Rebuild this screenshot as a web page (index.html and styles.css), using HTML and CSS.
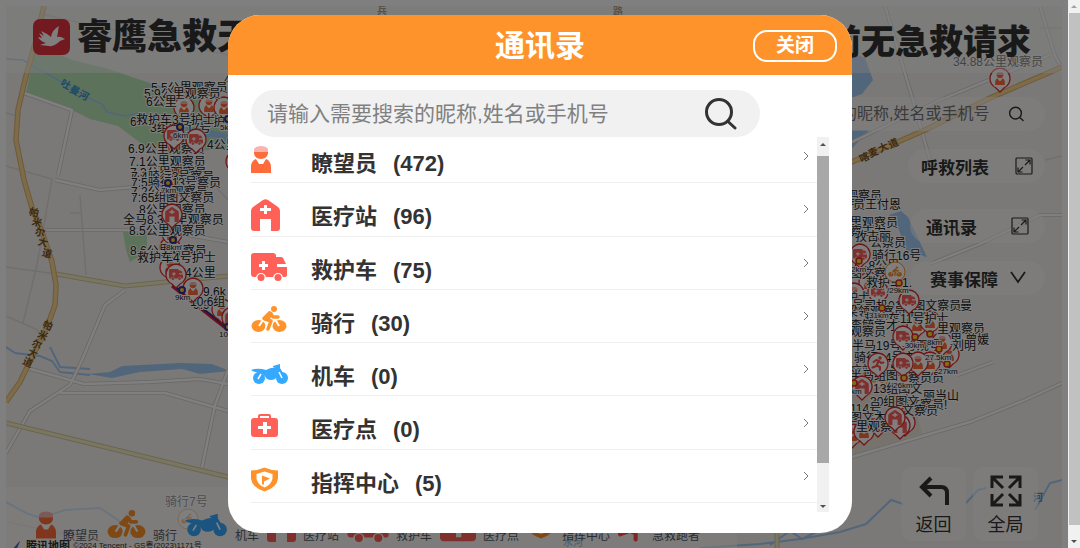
FILE: index.html
```html
<!DOCTYPE html>
<html lang="zh-CN">
<head>
<meta charset="utf-8">
<title>通讯录</title>
<link rel="stylesheet" href="styles.css">
</head>
<body>
<svg class="sprite" aria-hidden="true">
  <symbol id="i-watcher" viewBox="0 0 20 27">
    <path fill="#ff6c3b" d="M3 5h14v2c0 3-3 6-7 6S3 10 3 7zM0 27v-6c0-4 2-7 5-8l3 5h4l3-5c3 1 5 4 5 8v6z"/>
    <path fill="#fff" d="M6 13l4 5 4-5-4 1z"/>
    <path fill="#f9b4ae" d="M3 6V3c1-2 4-3 7-3s6 1 7 3v3z"/>
  </symbol>
  <symbol id="i-station" viewBox="0 0 29 32">
    <path fill="#ff6058" d="M12 1q2.500-1.500 5 0l10 7q2 1.500 2 4v17q0 3-3 3h-6V20H9v12H3q-3 0-3-3V12q0-2.500 2-4z"/>
    <path fill="#fff" d="M13 6h3v3h4v3h-4v3h-3v-3H9V9h4z"/>
  </symbol>
  <symbol id="i-ambulance" viewBox="0 0 36 28">
    <path fill="#ff6058" d="M3 0h19q3 0 3 3v1h5q1 0 2 1l3 6H26v3h10v8q0 2-2 2H3q-3 0-3-3V3q0-3 3-3z"/>
    <path fill="#fff" d="M11 8h3v3h3v3h-3v3h-3v-3H8v-3h3z"/>
    <circle cx="10" cy="25" r="5" fill="#fff"/><circle cx="27" cy="25" r="5" fill="#fff"/>
    <circle cx="10" cy="24.500" r="3.500" fill="#ff6058"/><circle cx="27" cy="24.500" r="3.500" fill="#ff6058"/>
  </symbol>
  <symbol id="i-bike" viewBox="0 0 36 26">
    <g fill="#ff932b"><ellipse cx="7.500" cy="20" rx="7" ry="6"/><ellipse cx="28.500" cy="20" rx="7" ry="6"/><circle cx="23" cy="3" r="3"/></g>
    <path d="M8 20l4-6M28 20l-4-7" stroke="#fff" stroke-width="2"/>
    <path fill="none" stroke="#fff" stroke-width="6" stroke-linejoin="round" d="M17 23l2-7-5-3"/>
    <path fill="none" stroke="#ff932b" stroke-width="3.500" stroke-linecap="round" stroke-linejoin="round" d="M17 23l3-8-6-2 5-6 3 4h5"/>
    <path fill="#ff932b" d="M11 12l7-7 4 2-4 8-6-1z"/>
  </symbol>
  <symbol id="i-moto" viewBox="0 0 38 20">
    <g fill="#35a8ff"><circle cx="8" cy="14" r="6"/><circle cx="31" cy="14" r="6"/>
    <path d="M0 6q5-2 11-1l4 1q6-3 9-2l-2-1V2l7-2v4l3 5-4 1-4 5q-4 2-8 0l-4-5-8-2q-3-1-4-2z"/></g>
    <path d="M7 15l3-5M31 14l-3-6" stroke="#fff" stroke-width="1.500"/>
  </symbol>
  <symbol id="i-kit" viewBox="0 0 27 23">
    <path fill="none" stroke="#ff6058" stroke-width="2" d="M8 5V2q0-1 1-1h9q1 0 1 1v3"/>
    <rect y="4" width="27" height="19" rx="3" fill="#ff6058"/>
    <path fill="#fff" d="M12 8h4v4h4v3h-4v5h-4v-5H7v-3h5z"/>
  </symbol>
  <symbol id="i-shield" viewBox="0 0 27 24">
    <path fill="#ff932b" d="M13.500 0Q20 3 27 3v8q-1 9-13.500 13Q1 20 0 11V3q7 0 13.500-3z"/>
    <path fill="#fff" d="M13.500 4l8 2.500V11q-1 6-8 9-7-3-8-9V6.500z"/>
    <path fill="#ff932b" d="M11 8l8 3-6 3v3h-2z"/>
  </symbol>
  <symbol id="i-runner" viewBox="0 0 26 30">
    <circle cx="17" cy="4" r="3.500" fill="#ff5044"/>
    <path fill="none" stroke="#ff5044" stroke-width="4" stroke-linecap="round" stroke-linejoin="round" d="M4 12l6-4 5 2 4 4 5-1M14 11l-4 8 7 3v6M10 20l-8 3"/>
  </symbol>
  <symbol id="i-expand" viewBox="0 0 18 18">
    <g fill="none" stroke="#333" stroke-width="1.200"><rect x="1" y="1" width="16" height="16" rx="1"/><path d="M10 8l5-5M10.500 3H15v4.500M8 10l-5 5M3 10.500V15h4.500"/></g>
  </symbol>
  <symbol id="i-search" viewBox="0 0 34 34">
    <g fill="none" stroke="#333" stroke-width="3" stroke-linecap="round"><circle cx="16" cy="15" r="12.500"/><path d="M25 24.500L32 31"/></g>
  </symbol>
  <symbol id="pin" viewBox="0 0 24 26">
    <path fill="#fff" stroke="#e02a2a" stroke-width="1.300" d="M12 1a10.500 10.500 0 0 1 4 20l-4 4-4-4A10.500 10.500 0 0 1 12 1z"/>
  </symbol>
  <symbol id="p-watcher" viewBox="0 0 24 26"><use href="#pin"/><use href="#i-watcher" x="7" y="5" width="10" height="13"/></symbol>
  <symbol id="p-station" viewBox="0 0 24 26"><use href="#pin"/><use href="#i-station" x="5" y="4" width="14" height="15"/></symbol>
  <symbol id="p-ambulance" viewBox="0 0 24 26"><use href="#pin"/><use href="#i-ambulance" x="5" y="6" width="14" height="11"/></symbol>
  <symbol id="p-runner" viewBox="0 0 24 26"><use href="#pin"/><use href="#i-runner" x="5" y="4" width="14" height="15"/></symbol>
  <symbol id="p-bike" viewBox="0 0 24 26"><circle cx="12" cy="12" r="10" fill="#fff" stroke="#ff932b"/><use href="#i-bike" x="5" y="6" width="14" height="11"/></symbol>
</svg>

<div class="page">
  <main class="stage">
    <svg class="map" viewBox="6 6 1056 542" preserveAspectRatio="xMinYMin slice" role="img" aria-label="赛事地图">
      <rect x="6" y="6" width="1056" height="542" fill="#f5f2ee"/>
      <g fill="#b9e4b6">
        <path d="M26 93L36 45 72 60 105 68 150 83 228 105V150H150L118 126 90 119 72 110z"/>
        <path d="M123 232h24v20l-17 10-4-12z"/>
      </g>
      <path fill="#efe6d8" d="M852 455l70-22-10-35-60-20z"/>
      <g fill="#a4cdf7">
        <path d="M845 50l20 8 8 22-11 14-17 6zM845 130h24l-24 26z"/>
        <path d="M889 215l12-4 7 6 19 40-20-5-8-22z"/>
        <path d="M88 374l22-2 12-6 58-3 32 1 18 7-30 3-18-5-42 3-28 6zM200 128l28 6v6l-22-4z"/>
      </g>
      <g fill="none" stroke="#a4cdf7" stroke-width="2">
        <path d="M6 59l17 1 17 10 22 12 20 13 20 9 5 8 18 4 14-3 40 12 30 12" stroke-width="1.500"/>
        <path d="M6 347l9 6 25 3 12 5 8 11 30 3M6 502l20 11 14 5 25-8 35-2 18 12 12 14M50 347l10 20 30 2"/>
        <path d="M700 548l60-4 40-5 40-7 26-8 25-24 12 4M966 503l12-13 8-2M1035 510l15-27 12-3M770 545l20-14 12 8 20-10"/>
      </g>
      <g fill="none" stroke="#d2cfca" stroke-width="4">
        <path d="M24 93l48 17-14 65M55 180l45 10 46-4M45 230h115l68 12M125 290l-20 15-23 55-12 25-40 26-24 42M27 368l57 16 66-2 50-3 28 5M60 393h105l63 18M228 370l-13 35-13 62"/>
        <path d="M852 142l88-42 110-45M885 6l27 91 18 63M1040 6l15 50 7 12M930 264l50-20 60-29h22M852 457l118-35 55-22 37-17M958 375l35-13"/>
      </g>
      <g fill="none" stroke="#fff" stroke-width="2.400">
        <path d="M24 93l48 17-14 65M55 180l45 10 46-4M45 230h115l68 12M125 290l-20 15-23 55-12 25-40 26-24 42M27 368l57 16 66-2 50-3 28 5M60 393h105l63 18M228 370l-13 35-13 62"/>
        <path d="M852 142l88-42 110-45M885 6l27 91 18 63M1040 6l15 50 7 12M930 264l50-20 60-29h22M852 457l118-35 55-22 37-17M958 375l35-13"/>
      </g>
      <g fill="none" stroke="#e2dfda" stroke-width="1.500">
        <path d="M45 15l183 40M6 113l12 3M6 166l46 13-15 86-14 58M80 195l6 80M6 267l50 7M6 316l32 14 2 10M70 213h12M205 175l23 25M6 522l100 20M1045 160l17-4M1040 28h22"/>
      </g>
      <g fill="none" stroke="#d8c999" stroke-width="5"><path d="M56 274l69 12 50-5 53-5M6 423l222 54 200 50M777 525v23"/></g>
      <g fill="none" stroke="#f5ecc8" stroke-width="3"><path d="M56 274l69 12 50-5 53-5M6 423l222 54 200 50M777 525v23"/></g>
      <g fill="none" stroke="#dab671" stroke-width="5.500"><path d="M44 6l-8 34-11 40-7 30-2 30 8 40 8 28 10 24 10 30 4 23-1 20-9 25-13 25-13 27-14 20M845 165l80-35 65-32 72-31"/></g>
      <g fill="none" stroke="#fbd795" stroke-width="3.500"><path d="M44 6l-8 34-11 40-7 30-2 30 8 40 8 28 10 24 10 30 4 23-1 20-9 25-13 25-13 27-14 20M845 165l80-35 65-32 72-31"/></g>

      <g class="river-name">
        <text transform="translate(66 84) rotate(28)" y="4">吐</text><text transform="translate(75 90) rotate(28)" y="4">曼</text><text transform="translate(84 95) rotate(28)" y="4">河</text><text x="1038" y="501">河</text><text x="573" y="546">水河</text>
      </g>
      <g class="road-name">
        <text transform="translate(34 212) rotate(15)" y="4">帕</text><text transform="translate(37 222) rotate(15)" y="4">米</text><text transform="translate(40 232) rotate(15)" y="4">尔</text><text transform="translate(43 242) rotate(15)" y="4">大</text><text transform="translate(47 253) rotate(15)" y="4">道</text>
        <text transform="translate(48 325) rotate(25)" y="4">帕</text><text transform="translate(43 335) rotate(25)" y="4">米</text><text transform="translate(37 344) rotate(25)" y="4">尔</text><text transform="translate(33 353) rotate(25)" y="4">大</text><text transform="translate(28 362) rotate(25)" y="4">道</text>
        <text transform="translate(864 157) rotate(-25)" y="4">喀</text><text transform="translate(873 152) rotate(-25)" y="4">麦</text><text transform="translate(883 147) rotate(-25)" y="4">大</text><text transform="translate(893 143) rotate(-25)" y="4">道</text>
        <text x="618" y="15">路</text><text x="382" y="14">兵</text>
      </g>

      <path fill="none" stroke="#d6203a" stroke-width="3" d="M172 286l56 44"/>
      <path fill="none" stroke="#33309b" stroke-width="2" d="M173 285l56 44"/>
      <g>
        <use href="#p-watcher" x="172" y="96" width="24" height="26"/><use href="#p-watcher" x="197" y="94" width="24" height="26"/><use href="#p-watcher" x="212" y="96" width="24" height="26"/>
        <use href="#p-station" x="162" y="134" width="24" height="26"/><use href="#p-station" x="224" y="150" width="24" height="26"/>
        <use href="#p-watcher" x="156" y="168" width="24" height="26"/><use href="#p-watcher" x="160" y="184" width="24" height="26"/>
        <use href="#p-watcher" x="158" y="236" width="24" height="26"/><use href="#p-watcher" x="160" y="222" width="24" height="26"/>
        <use href="#p-watcher" x="158" y="256" width="24" height="26"/>
        <use href="#p-watcher" x="210" y="298" width="24" height="26"/><use href="#p-station" x="220" y="306" width="24" height="26"/>
        <use href="#p-watcher" x="857" y="271" width="24" height="26"/><use href="#p-ambulance" x="866" y="280" width="24" height="26"/><use href="#p-watcher" x="842" y="282" width="24" height="26"/>
        <use href="#p-watcher" x="905" y="313" width="24" height="26"/><use href="#p-watcher" x="918" y="310" width="24" height="26"/>
        <use href="#p-watcher" x="937" y="343" width="24" height="26"/><use href="#p-watcher" x="930" y="331" width="24" height="26"/>
        <use href="#p-watcher" x="918" y="351" width="24" height="26"/><use href="#p-bike" x="866" y="366" width="24" height="26"/>
        <use href="#p-ambulance" x="886" y="388" width="24" height="26"/><use href="#p-watcher" x="893" y="411" width="24" height="26"/><use href="#p-station" x="888" y="414" width="24" height="26"/>
        <use href="#p-watcher" x="840" y="423" width="24" height="26"/><use href="#p-watcher" x="852" y="420" width="24" height="26"/><use href="#p-ambulance" x="866" y="412" width="24" height="26"/>
        <use href="#p-watcher" x="988" y="67" width="24" height="26"/>
        <use href="#p-bike" x="176" y="507" width="24" height="26"/>
      </g>
      <g class="marks">
        <text x="224" y="84">4</text><text x="151" y="92">5.5公里观察员骑</text><text x="144" y="98">5.9公里观察员</text><text x="146" y="106">6公里</text>
        <text x="130" y="126">6</text><text x="150" y="132">3组骑行7号</text><text x="213" y="126">护</text><text x="136" y="124">救护车3号护士</text>
        <text x="128" y="153">6.9公里观察员</text><text x="207" y="149">4公里</text><text x="129" y="166">7.1公里观察员</text>
        <text x="130" y="177">7.3公里观察员</text><text x="131" y="181">7.4骑行3号察员</text><text x="131" y="187">7.5骑行13号察员</text><text x="131" y="196">7.2公里观察员</text><text x="131" y="202">7.65组图文察员</text>
        <text x="139" y="214">8公里观察员</text><text x="123" y="224">全马8.3公里观察员</text><text x="129" y="235">8.5公里观察员</text><text x="130" y="255">8.6公里观察员</text><text x="137" y="262">救护车4号护士</text>
        <text x="185" y="277">4公里</text><text x="203" y="296">9.6k</text><text x="193" y="309">9.9</text><text x="190" y="306">10.6组</text>
        <text x="165" y="506">骑行7号</text>
        <text x="846" y="200">观察员</text><text x="848" y="207">号</text><text x="853" y="209">员王付恩</text><text x="850" y="227">里观察员</text><text x="850" y="236">察古力</text><text x="870" y="247">公察员</text><text x="855" y="241">孜古丽</text><text x="872" y="260">骑行16号</text><text x="852" y="270">11-8公里</text><text x="850" y="278">图文察员</text>
        <text x="866" y="287">救护车1.</text><text x="846" y="302">护士</text><text x="912" y="310">图文察员曼</text><text x="852" y="310">号司机01组图文察员</text><text x="846" y="316">梁领观察员半</text><text x="864" y="323">救护车11号护士</text><text x="850" y="330">李毓宝才</text><text x="850" y="336">观察员</text><text x="937" y="333">里观察员</text><text x="950" y="344">里,曾媛</text><text x="952" y="350">刘明</text>
        <text x="852" y="350">半马19号.号观号</text><text x="854" y="362">骑行14号市</text><text x="850" y="375">疗站 号暴</text><text x="850" y="380">半马组图</text><text x="908" y="382">察员员</text><text x="873" y="393">13组图文</text><text x="923" y="400">丽当山</text><text x="908" y="409">文察员!</text><text x="870" y="406">30组图文</text><text x="850" y="413">114号</text><text x="902" y="415">文察员</text><text x="850" y="422">图文木</text><text x="856" y="431">里观察</text>
        <text x="953" y="66">34.88公里观察员</text>
      </g>
      <g>
        <use href="#p-ambulance" x="162" y="124" width="24" height="26"/><use href="#p-ambulance" x="184" y="128" width="24" height="26"/>
        <use href="#p-station" x="160" y="203" width="24" height="26"/><use href="#p-ambulance" x="164" y="263" width="24" height="26"/><use href="#p-watcher" x="181" y="277" width="24" height="26"/>
        <use href="#p-ambulance" x="848" y="243" width="24" height="26"/><use href="#p-bike" x="883" y="260" width="24" height="26"/><use href="#p-ambulance" x="897" y="289" width="24" height="26"/>
        <use href="#p-ambulance" x="891" y="325" width="24" height="26"/><use href="#p-runner" x="866" y="352" width="24" height="26"/><use href="#p-watcher" x="906" y="351" width="24" height="26"/><use href="#p-ambulance" x="891" y="352" width="24" height="26"/>
        <use href="#p-station" x="850" y="375" width="24" height="26"/><use href="#p-station" x="883" y="406" width="24" height="26"/>
      </g>
      <g fill="#ffcc1a" stroke="#33309b" stroke-width="2"><circle cx="180" cy="127" r="3"/><circle cx="228" cy="119" r="3"/><circle cx="168" cy="183" r="3"/><circle cx="173" cy="240" r="3"/><circle cx="182" cy="290" r="3"/><circle cx="228" cy="327" r="3"/></g>
      <g fill="#ffdc1a" stroke="#e02a2a" stroke-width="1.500"><circle cx="859" cy="261" r="3"/><circle cx="899" cy="283" r="3"/><circle cx="882" cy="308" r="3"/><circle cx="915" cy="337" r="3"/><circle cx="930" cy="334" r="3"/><circle cx="939" cy="349" r="3"/><circle cx="947" cy="364" r="3"/><circle cx="904" cy="378" r="3"/><circle cx="854" cy="383" r="3"/></g>
      <g class="marks km"><text x="173" y="138">6km</text><text x="220" y="130">5k</text><text x="161" y="193">7km</text><text x="166" y="250">8km</text><text x="175" y="300">9km</text><text x="219" y="337">10</text><text x="851" y="272">2km</text><text x="887" y="293">/29km</text><text x="869" y="318">31km</text><text x="902" y="348">-30km</text><text x="927" y="345">8km</text><text x="925" y="360">27.5km</text><text x="938" y="374">27km</text><text x="893" y="388">26km</text><text x="851" y="394">km</text></g>
    </svg>

    <header class="topbar">
      <div class="brand">
        <svg class="logo" viewBox="0 0 37 36" aria-hidden="true"><rect width="37" height="36" rx="7" fill="#e73440"/><path fill="#fff" d="M6 14l5 3-3-5 6 3 4 3q1-7 8-11-1 3-1 6l-1 5q3-1 6 1l2 1-5 2q-6 6-11 5l-9-1 6-2q-6-2-8-6l4 1z"/></svg>
        <h1 class="brand-name">睿鹰急救天眼</h1>
      </div>
      <h2 class="alert">当前无急救请求</h2>
    </header>

    <aside class="tools">
      <label class="pill pill-search"><input class="pill-input" type="text" placeholder="请输入需要搜索的昵称,姓名或手机号" aria-label="地图搜索"><svg class="ico-sm" aria-hidden="true"><use href="#i-search"/></svg></label>
      <button class="pill pill-wide" type="button"><span>呼救列表</span><svg class="ico" aria-hidden="true"><use href="#i-expand"/></svg></button>
      <button class="pill" type="button"><span>通讯录</span><svg class="ico" aria-hidden="true"><use href="#i-expand"/></svg></button>
      <button class="pill pill-menu" type="button"><span>赛事保障</span><svg class="ico" viewBox="0 0 18 18" aria-hidden="true"><path d="M2 3l7 10 7-10" fill="none" stroke="#333" stroke-width="1.800"/></svg></button>
    </aside>

    <nav class="actions">
      <button class="tile" type="button"><svg class="tile-ico" viewBox="0 0 34 34" aria-hidden="true"><path d="M14 4l-9 9 9 9M5 13h19q6 0 6 6v12" fill="none" stroke="#333" stroke-width="4"/></svg>返回</button>
      <button class="tile" type="button"><svg class="tile-ico" viewBox="0 0 34 34" aria-hidden="true"><path d="M3 14V3h11M3 3l11 11M20 3h11v11M31 3L20 14M3 20v11h11M3 31l11-11M31 20v11H20M31 31L20 20" fill="none" stroke="#333" stroke-width="3"/></svg>全局</button>
    </nav>

    <ul class="legend">
      <li><svg width="20" height="34"><use href="#i-watcher"/></svg>瞭望员</li>
      <li><svg width="39" height="36"><use href="#i-bike"/></svg>骑行</li>
      <li><svg width="43" height="34"><use href="#i-moto"/></svg>机车</li>
      <li><svg width="29" height="32"><use href="#i-station"/></svg>医疗站</li>
      <li><svg width="42" height="32"><use href="#i-ambulance"/></svg>救护车</li>
      <li><svg width="36" height="32"><use href="#i-kit"/></svg>医疗点</li>
      <li><svg width="28" height="32"><use href="#i-shield"/></svg>指挥中心</li>
      <li><svg width="27" height="32"><use href="#i-runner"/></svg>急救跑者</li>
    </ul>
    <p class="credit"><svg width="14" height="14" viewBox="0 0 14 14" aria-hidden="true"><path d="M3 11L11 2 8 9z" fill="#e5322d"/><path d="M11 2L3 11l-1 3 6-5z" fill="#2677e8"/></svg><b>腾讯地图</b><span>©2024 Tencent - GS粤(2023)1171号</span></p>
    <div class="shade"></div>
  </main>

  <div class="page-scroll" aria-hidden="true"><i class="up pale"></i><div class="page-thumb"></div><i class="down"></i></div>
</div>

<div class="layer">
  <section class="dialog" role="dialog" aria-labelledby="dlg-title">
    <header class="dialog-head">
      <h2 class="dialog-title" id="dlg-title">通讯录</h2>
      <button class="close" type="button">关闭</button>
    </header>
    <div class="dialog-body">
      <label class="search"><input class="search-input" type="text" placeholder="请输入需要搜索的昵称,姓名或手机号" aria-label="搜索通讯录"><svg class="search-ico" aria-hidden="true"><use href="#i-search"/></svg></label>
      <div class="list-box">
        <ul class="list">
          <li class="row"><span class="pic"><svg width="20" height="27"><use href="#i-watcher"/></svg></span><span class="name">瞭望员</span><span class="count">(472)</span><svg class="chev" viewBox="0 0 6 10"><path d="M1 1l4 4-4 4"/></svg></li>
          <li class="row"><span class="pic"><svg width="29" height="32"><use href="#i-station"/></svg></span><span class="name">医疗站</span><span class="count">(96)</span><svg class="chev" viewBox="0 0 6 10"><path d="M1 1l4 4-4 4"/></svg></li>
          <li class="row"><span class="pic"><svg width="36" height="28"><use href="#i-ambulance"/></svg></span><span class="name">救护车</span><span class="count">(75)</span><svg class="chev" viewBox="0 0 6 10"><path d="M1 1l4 4-4 4"/></svg></li>
          <li class="row"><span class="pic"><svg width="36" height="26"><use href="#i-bike"/></svg></span><span class="name">骑行</span><span class="count">(30)</span><svg class="chev" viewBox="0 0 6 10"><path d="M1 1l4 4-4 4"/></svg></li>
          <li class="row"><span class="pic"><svg width="38" height="30"><use href="#i-moto"/></svg></span><span class="name">机车</span><span class="count">(0)</span><svg class="chev" viewBox="0 0 6 10"><path d="M1 1l4 4-4 4"/></svg></li>
          <li class="row"><span class="pic"><svg width="27" height="27"><use href="#i-kit"/></svg></span><span class="name">医疗点</span><span class="count">(0)</span><svg class="chev" viewBox="0 0 6 10"><path d="M1 1l4 4-4 4"/></svg></li>
          <li class="row"><span class="pic"><svg width="27" height="27"><use href="#i-shield"/></svg></span><span class="name">指挥中心</span><span class="count">(5)</span><svg class="chev" viewBox="0 0 6 10"><path d="M1 1l4 4-4 4"/></svg></li>
        </ul>
        <div class="list-scroll" aria-hidden="true"><i class="up"></i><div class="list-thumb"></div><i class="down"></i></div>
      </div>
    </div>
  </section>
</div>
</body>
</html>
```
FILE: styles.css
```css
* { box-sizing: border-box; }

body {
  margin: 0;
  overflow: hidden;
  background: #fff;
  color: #333;
  font-family: "Liberation Sans", "Noto Sans CJK SC", sans-serif;
}

h1, h2, p, ul { margin: 0; padding: 0; }
ul { list-style: none; }
button, input { font: inherit; color: inherit; border: 0; padding: 0; background: none; }
input { outline: 0; min-width: 0; }
.sprite { position: absolute; width: 0; height: 0; }

.page { display: flex; height: 100vh; }

.stage {
  position: relative;
  flex: 1;
  display: flex;
  flex-direction: column;
  justify-content: space-between;
  padding: 6px 6px 0;
  overflow: hidden;
}

.map {
  position: absolute;
  left: 6px;
  top: 6px;
  width: calc(100% - 12px);
  height: calc(100% - 6px);
}
.marks text {
  font-size: 12px;
  fill: #222;
  stroke: #fff;
  stroke-width: 2px;
  paint-order: stroke;
}
.km text { font-size: 8px; }
.river-name text, .road-name text { font-size: 10px; font-weight: bold; text-anchor: middle; }
.river-name text { fill: #3d94c8; }
.road-name text { fill: #7b5425; }

.topbar {
  position: relative;
  display: flex;
  justify-content: space-between;
  align-items: center;
  height: 67px;
  padding: 0 31px 0 27px;
  background: rgba(255, 255, 255, 0.45);
}
.brand { display: flex; align-items: center; gap: 7px; margin-top: -6px; }
.logo { width: 37px; height: 36px; }
.brand-name { font-size: 35px; line-height: 40px; font-weight: 900; }
.alert { padding-top: 4px; font-size: 34px; line-height: 40px; font-weight: 900; }

.tools {
  position: absolute;
  top: 97px;
  right: 23px;
  display: flex;
  flex-direction: column;
  align-items: flex-end;
  gap: 18px;
}
.pill {
  display: flex;
  align-items: center;
  justify-content: space-between;
  width: 135px;
  height: 34px;
  padding: 0 16px;
  border-radius: 17px;
  background: rgba(255, 255, 255, 0.5);
  font-size: 17px;
  font-weight: bold;
}
.pill-wide { width: 137px; padding: 0 12px 0 13px; margin-bottom: 8px; }
.pill-menu { padding: 0 18px 0 20px; }
.pill-search { width: 356px; padding: 0 21px 0 40px; font-size: 16px; font-weight: normal; }
.pill-input { width: 270px; }
.pill-input::placeholder { color: #757575; }
.ico { width: 18px; height: 18px; }
.ico-sm { width: 16px; height: 16px; }

.actions { position: absolute; right: 30px; bottom: 7px; display: flex; gap: 7px; }
.tile {
  display: flex;
  flex-direction: column;
  align-items: center;
  gap: 4px;
  width: 65px;
  height: 74px;
  padding-top: 7px;
  border-radius: 10px;
  background: rgba(255, 255, 255, 0.5);
  font-size: 18px;
  line-height: 26px;
}
.tile-ico { width: 34px; height: 34px; }

.legend {
  position: relative;
  display: flex;
  align-items: flex-end;
  align-self: flex-start;
  gap: 8px;
  height: 61px;
  padding: 0 37px 6px 30px;
  background: rgba(255, 255, 255, 0.55);
  color: #555c66;
  font-size: 12px;
  line-height: 12px;
  white-space: nowrap;
}
.legend li { display: flex; align-items: flex-end; gap: 7px; }

.credit {
  position: absolute;
  left: 9px;
  bottom: -5px;
  display: flex;
  align-items: center;
  gap: 3px;
  font-size: 11px;
  line-height: 14px;
}
.credit span { font-size: 8px; }

.shade { position: absolute; inset: 0; background: rgba(0, 0, 0, 0.5); }

.page-scroll, .list-scroll {
  display: flex;
  flex-direction: column;
  align-items: center;
  width: 12px;
  background: #f1f1f1;
}
.page-scroll { padding: 5px 0; gap: 5px; }
.page-thumb { flex: 1; width: 11px; margin-bottom: 10px; background: #c1c1c1; }
.up, .down { border: 3px solid transparent; }
.up { border-top: 0; border-bottom-color: #505050; }
.down { border-bottom: 0; border-top-color: #505050; }
.pale { border-bottom-color: #a3a3a3; }

.layer {
  position: fixed;
  inset: 0;
  display: flex;
  align-items: center;
  justify-content: center;
}
.dialog {
  width: 624px;
  max-width: 94%;
  border-radius: 32px;
  overflow: hidden;
  background: #fff;
}
.dialog-head {
  display: grid;
  grid-template-columns: 1fr auto 1fr;
  align-items: center;
  height: 60px;
  padding: 1px 15px 0;
  background: #ff932b;
  color: #fff;
}
.dialog-title { grid-column: 2; font-size: 30px; line-height: 40px; }
.close {
  justify-self: end;
  width: 84px;
  height: 32px;
  border: 2px solid #fff;
  border-radius: 14px;
  font-size: 19px;
  font-weight: bold;
  line-height: 28px;
}
.dialog-body { padding: 15px 23px 21px; }

.search {
  display: flex;
  align-items: center;
  justify-content: space-between;
  width: 88%;
  height: 47px;
  padding: 0 23px 0 16px;
  border-radius: 24px;
  background: #f1f1f1;
  font-size: 21px;
}
.search-input { flex: 1; }
.search-input::placeholder { color: #808080; }
.search-ico { width: 34px; height: 34px; }

.list-box { display: flex; height: 375px; overflow: hidden; }
.list { flex: 1; display: flex; flex-direction: column; height: 373px; margin-top: -7px; }
.row {
  flex: 1;
  display: flex;
  align-items: flex-start;
  border-bottom: 1px solid #f0f0f0;
  font-size: 22px;
  font-weight: bold;
  line-height: 34px;
}
.pic { display: flex; width: 60px; padding-top: 16px; }
.name { padding-top: 17px; }
.count { flex: 1; padding: 17px 0 0 16px; }
.chev { align-self: center; width: 6px; height: 10px; margin-right: 8px; fill: none; stroke: #777; stroke-width: 1px; }
.list-scroll { padding: 6px 0 4px; gap: 10px; }
.list-thumb { flex: 1; width: 12px; margin-bottom: 32px; background: #a8a8a8; }
```
